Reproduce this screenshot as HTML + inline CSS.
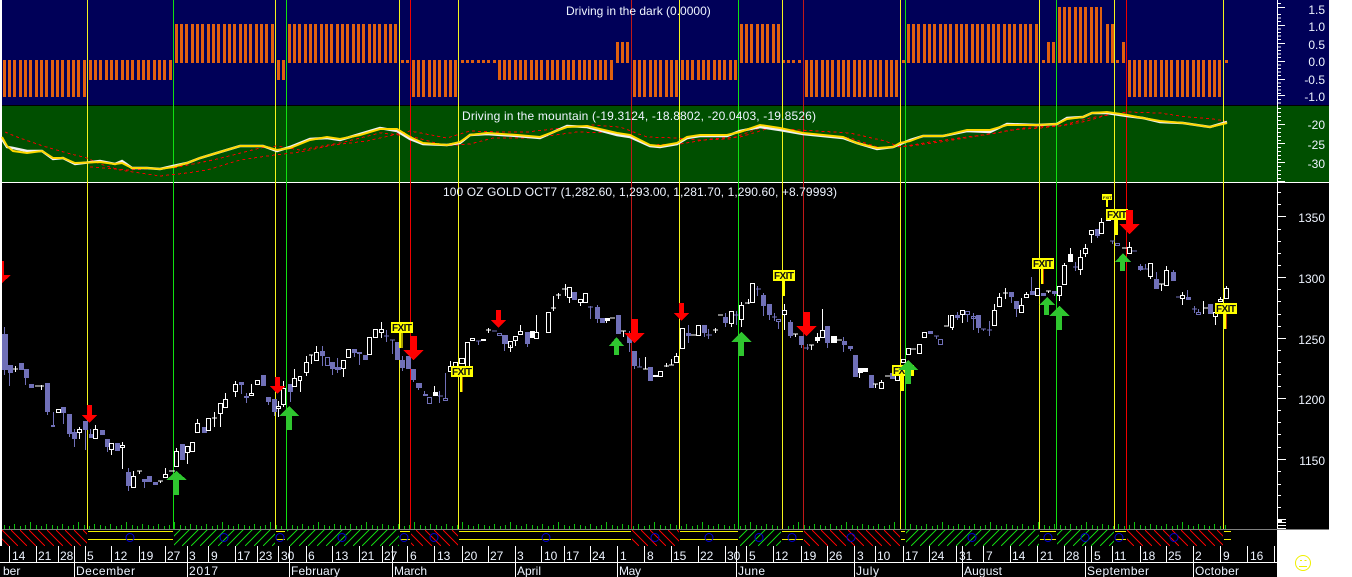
<!DOCTYPE html>
<html><head><meta charset="utf-8"><style>
html,body{margin:0;padding:0;background:#fff;width:1352px;height:577px;overflow:hidden}
svg{display:block}
text{font-family:"Liberation Sans",Arial,sans-serif;font-size:12px;fill:#eef4ff}
.c{shape-rendering:crispEdges}
.ax{fill:#e8f2ff}
.x{font-size:10px;font-weight:bold;fill:#111}
</style></head><body>
<svg width="1352" height="577" viewBox="0 0 1352 577" xmlns="http://www.w3.org/2000/svg">
<defs>
<pattern id="hr" patternUnits="userSpaceOnUse" x="2" y="530" width="9" height="16"><path class="c" d="M-18 0L-2 16M-9 0L7 16M0 0L16 16" stroke="#f00000" fill="none"/></pattern>
<pattern id="hg" patternUnits="userSpaceOnUse" x="2" y="530" width="9" height="16"><path class="c" d="M-2 0L-18 16M7 0L-9 16M16 0L0 16" stroke="#10d010" fill="none"/></pattern>
<pattern id="b" patternUnits="userSpaceOnUse" x="0" y="0" width="16" height="200"><path class="c" fill="#e0600f" d="M0 0H3V200H0zM5 0H8V200H5zM10 0H13V200H10z"/></pattern>
<pattern id="v" patternUnits="userSpaceOnUse" x="0" y="0" width="48" height="600"><path class="c" fill="#10c010" d="M0 525H1V529H0zM5 526H6V529H5zM10 524H11V529H10zM16 526H17V529H16zM21 525H22V529H21zM26 522H27V529H26zM32 525H33V529H32zM37 526H38V529H37zM42 524H43V529H42z"/></pattern>
</defs>
<g class="c">
<rect x="2" y="0" width="1327" height="105" fill="#000058"/>
<rect x="2" y="105" width="1327" height="1" fill="#000"/>
<rect x="2" y="106" width="1327" height="76" fill="#004f00"/>
<rect x="2" y="182" width="1327" height="1" fill="#fff"/>
<rect x="2" y="183" width="1327" height="346" fill="#000"/>
<rect x="2" y="529" width="1327" height="1" fill="#808080"/>
<rect x="2" y="530" width="1275" height="47" fill="#000"/>
<rect x="0" y="546" width="1277" height="31" fill="#000"/>

<!-- orange bars -->
<g fill="url(#b)">
<rect transform="translate(3)" y="60" width="84" height="37"/><rect transform="translate(412)" y="60" width="47" height="37"/><rect transform="translate(633)" y="60" width="45" height="37"/><rect transform="translate(805)" y="60" width="95" height="37"/><rect transform="translate(1128)" y="60" width="94" height="37"/>
<rect transform="translate(89)" y="60" width="84" height="20"/><rect transform="translate(277)" y="60" width="8" height="20"/><rect transform="translate(498)" y="60" width="116" height="20"/><rect transform="translate(681)" y="60" width="57" height="20"/>
<rect transform="translate(175)" y="24" width="100" height="39"/><rect transform="translate(288)" y="24" width="111" height="39"/><rect transform="translate(740)" y="24" width="40" height="39"/><rect transform="translate(907)" y="24" width="132" height="39"/><rect transform="translate(1106)" y="24" width="8" height="39"/>
<rect transform="translate(616)" y="42" width="15" height="21"/><rect transform="translate(1047)" y="42" width="9" height="21"/><rect transform="translate(1122)" y="42" width="3" height="21"/>
<rect transform="translate(1058)" y="7" width="44" height="56"/>
<rect transform="translate(401)" y="60" width="8" height="3"/><rect transform="translate(461)" y="60" width="35" height="3"/><rect transform="translate(782)" y="60" width="20" height="3"/><rect transform="translate(902)" y="60" width="3" height="3"/><rect transform="translate(1042)" y="60" width="3" height="3"/><rect transform="translate(1116)" y="60" width="3" height="3"/><rect transform="translate(1225)" y="60" width="3" height="3"/>
</g>

<!-- volume ticks -->
<rect transform="translate(4)" y="520" width="1223" height="9" fill="url(#v)"/>

<!-- hatch strip -->
<rect x="2" y="530" width="85" height="16" fill="url(#hr)"/>
<rect x="174" y="530" width="101" height="16" fill="url(#hg)"/>
<rect x="287" y="530" width="112" height="16" fill="url(#hg)"/>
<rect x="411" y="530" width="47" height="16" fill="url(#hr)"/>
<rect x="632" y="530" width="47" height="16" fill="url(#hr)"/>
<rect x="739" y="530" width="42" height="16" fill="url(#hg)"/>
<rect x="804" y="530" width="96" height="16" fill="url(#hr)"/>
<rect x="906" y="530" width="133" height="16" fill="url(#hg)"/>
<rect x="1057" y="530" width="57" height="16" fill="url(#hg)"/>
<rect x="1127" y="530" width="96" height="16" fill="url(#hr)"/>
<path fill="none" stroke="#f0f000" d="M88 531.5H173M88 539.5H173M276 531.5H285M276 539.5H285M400 531.5H410M400 539.5H410M459 531.5H631M459 539.5H631M680 531.5H738M680 539.5H738M782 531.5H803M782 539.5H803M901 531.5H905M901 539.5H905M1040 531.5H1056M1040 539.5H1056M1115 531.5H1126M1115 539.5H1126M1224 531.5H1231M1224 539.5H1231"/>
</g>
<g fill="none" stroke="#0000d0">
<circle cx="130" cy="537.5" r="4"/><circle cx="224" cy="537.5" r="4"/><circle cx="280" cy="537.5" r="4"/><circle cx="342" cy="537.5" r="4"/><circle cx="404" cy="537.5" r="4"/><circle cx="434" cy="537.5" r="4"/><circle cx="546" cy="537.5" r="4"/><circle cx="655" cy="537.5" r="4"/><circle cx="709" cy="537.5" r="4"/><circle cx="759" cy="537.5" r="4"/><circle cx="792" cy="537.5" r="4"/><circle cx="851" cy="537.5" r="4"/><circle cx="972" cy="537.5" r="4"/><circle cx="1048" cy="537.5" r="4"/><circle cx="1085" cy="537.5" r="4"/><circle cx="1119" cy="537.5" r="4"/><circle cx="1174" cy="537.5" r="4"/>
</g>

<g class="c" fill="none">
<!-- vertical lines -->
<path stroke="#f4f41c" d="M87.5 0V529M275.5 0V529M399.5 0V529M458.5 0V529M679.5 0V529M782.5 0V529M900.5 0V529M1039.5 0V529M1114.5 0V529M1223.5 0V529"/>
<path stroke="#10e010" d="M173.5 0V529M286.5 0V529M738.5 0V529M905.5 0V529M1056.5 0V529"/>
<path stroke="#f00000" d="M410.5 0V529M1126.5 0V529"/>
<path stroke="#c01818" d="M631.5 0V529M803.5 0V529"/>

<!-- blue candles -->
<path fill="#7070b8" d="M2 334H8V370H2zM8 365H13V373H8zM19 363H24V370H19zM24 369H29V378H24zM29 384H34V388H29zM45 383H50V412H45zM51 425H55V427H51zM61 407H66V413H61zM67 414H72V434H67zM72 432H77V439H72zM83 421H88V430H83zM89 434H93V438H89zM100 430H105V435H100zM105 439H110V447H105zM115 443H120V451H115zM126 472H131V486H126zM142 479H147V482H142zM147 476H152V482H147zM153 482H158V485H153zM180 444H185V460H180zM202 427H207V433H202zM239 382H244V385H239zM244 396H249V398H244zM261 375H266V386H261zM266 397H271V402H266zM272 399H277V412H272zM288 384H293V392H288zM320 351H325V356H320zM330 362H335V369H330zM335 367H341V370H335zM352 349H357V353H352zM357 352H362V354H357zM363 355H368V360H363zM395 342H400V360H395zM400 360H405V368H400zM406 356H411V369H406zM411 369H416V380H411zM416 383H422V388H416zM423 394H428V396H423zM502 335H508V344H502zM525 332H530V344H525zM572 292H577V300H572zM595 307H600V319H595zM600 318H605V323H600zM616 315H621V334H616zM627 335H632V343H627zM632 351H637V366H632zM648 367H653V381H648zM686 333H691V336H686zM702 325H707V333H702zM723 317H728V323H723zM761 295H766V306H761zM767 304H772V315H767zM788 322H793V336H788zM799 336H804V345H799zM825 326H830V343H825zM842 341H847V345H842zM848 346H853V349H848zM853 355H858V377H853zM869 375H874V388H869zM890 373H895V379H890zM928 331H933V334H928zM955 315H960V318H955zM976 315H981V328H976zM1009 292H1014V297H1009zM1014 301H1019V309H1014zM1030 291H1035V295H1030zM1041 293H1046V296H1041zM1052 291H1057V294H1052zM1095 229H1100V236H1095zM1138 266H1143V270H1138zM1154 279H1159V289H1154zM1171 272H1176V281H1171zM1186 297H1191V300H1186zM1208 304H1213V314H1208z"/>
<path stroke="#7070b8" d="M4.5 327V375M9.5 373V386M25.5 378V385M47.5 412V415M53.5 412V425M63.5 413V424M69.5 434V437M74.5 429V447M85.5 430V450M90.5 429V434M107.5 447V452M128.5 468V491M144.5 482V488M241.5 385V394M246.5 393V403M268.5 402V405M274.5 412V416M290.5 392V402M322.5 346V366M332.5 369V375M337.5 358V373M354.5 353V357M359.5 354V365M386.5 330V342M384 336H389M392.5 340V354M390 340H395M402.5 356V371M413.5 380V382M418.5 388V390M424.5 391V394M438 396H443M439.5 391V403M445.5 373V398M476 341H481M478.5 341V345M492 331H497M504.5 344V351M527.5 344V347M588 307H593M590.5 306V319M597.5 305V323M629.5 331V352M634.5 366V369M637 367H642M639.5 358V367M688.5 325V343M704.5 333V337M706 335H712M708.5 329V339M725.5 313V327M734 315H739M736.5 311V325M756 289H761M757.5 286V296M763.5 293V316M769.5 315V320M772 317H777M774.5 313V321M778.5 322V329M790.5 320V338M801.5 345V348M804 348H809M807.5 344V350M827.5 343V348M843.5 337V352M850.5 349V351M934 336H939M936.5 336V339M957.5 312V320M978.5 328V333M981 329H986M983.5 329V331M987 330H992M989.5 321V336M1011.5 297V303M1016.5 309V317M1031.5 277V291M1054.5 294V296M1073 267H1078M1075.5 262V271M1097.5 236V238M1110 241H1115M1112.5 241V244M1132 251H1137M1140.5 264V271M1143 269H1148M1145.5 264V269M1156.5 272V279M1173.5 270V272M1176 297H1181M1187.5 290V297M1192 309H1197M1194.5 306V313M1198.5 309V312"/>
<!-- blue hollow -->
<path stroke="#7070b8" d="M325.5 357.5H329.5V365.5H325.5zM427.5 397.5H431.5V403.5H427.5zM443.5 398.5H447.5V400.5H443.5zM497.5 333.5H501.5V335.5H497.5zM776.5 319.5H780.5V321.5H776.5zM938.5 339.5H942.5V344.5H938.5zM965.5 311.5H969.5V314.5H965.5zM971.5 316.5H975.5V318.5H971.5zM973.5 313V330M967.5 315V322M1115.5 243.5H1119.5V245.5H1115.5zM1196.5 312.5H1200.5V314.5H1196.5z"/>

<!-- white hollow -->
<path stroke="#fff" d="M56.5 409.5H60.5V412.5H56.5zM77.5 429.5H81.5V432.5H77.5zM93.5 429.5H97.5V438.5H93.5zM109.5 443.5H113.5V449.5H109.5zM120.5 445.5H124.5V447.5H120.5zM131.5 476.5H135.5V487.5H131.5zM163.5 474.5H167.5V477.5H163.5zM174.5 451.5H178.5V466.5H174.5zM185.5 446.5H189.5V452.5H185.5zM190.5 442.5H194.5V451.5H190.5zM195.5 423.5H199.5V432.5H195.5zM206.5 418.5H210.5V430.5H206.5zM218.5 403.5H222.5V413.5H218.5zM223.5 399.5H227.5V407.5H223.5zM233.5 384.5H237.5V391.5H233.5zM249.5 393.5H253.5V395.5H249.5zM255.5 380.5H259.5V384.5H255.5zM276.5 406.5H280.5V408.5H276.5zM281.5 388.5H285.5V404.5H281.5zM292.5 378.5H296.5V386.5H292.5zM298.5 376.5H301.5V380.5H298.5zM304.5 362.5H308.5V372.5H304.5zM314.5 352.5H318.5V360.5H314.5zM341.5 360.5H345.5V368.5H341.5zM346.5 349.5H350.5V357.5H346.5zM367.5 337.5H371.5V354.5H367.5zM373.5 329.5H377.5V337.5H373.5zM379.5 329.5H383.5V332.5H379.5zM448.5 366.5H451.5V371.5H448.5zM453.5 362.5H457.5V371.5H453.5zM459.5 358.5H464.5V363.5H459.5zM465.5 342.5H469.5V369.5H465.5zM470.5 338.5H474.5V340.5H470.5zM508.5 341.5H512.5V347.5H508.5zM513.5 336.5H517.5V340.5H513.5zM518.5 331.5H522.5V334.5H518.5zM534.5 332.5H538.5V338.5H534.5zM546.5 312.5H550.5V332.5H546.5zM567.5 287.5H571.5V297.5H567.5zM578.5 299.5H582.5V302.5H578.5zM583.5 293.5H587.5V302.5H583.5zM658.5 371.5H662.5V376.5H658.5zM674.5 356.5H678.5V362.5H674.5zM680.5 328.5H684.5V348.5H680.5zM696.5 325.5H700.5V335.5H696.5zM729.5 311.5H733.5V323.5H729.5zM739.5 305.5H743.5V319.5H739.5zM750.5 283.5H754.5V302.5H750.5zM782.5 310.5H786.5V314.5H782.5zM820.5 330.5H824.5V337.5H820.5zM879.5 382.5H883.5V388.5H879.5zM895.5 375.5H899.5V380.5H895.5zM901.5 359.5H905.5V362.5H901.5zM906.5 348.5H910.5V354.5H906.5zM917.5 344.5H921.5V353.5H917.5zM922.5 332.5H926.5V337.5H922.5zM950.5 315.5H953.5V327.5H950.5zM960.5 310.5H964.5V314.5H960.5zM992.5 310.5H996.5V325.5H992.5zM997.5 297.5H1001.5V306.5H997.5zM1019.5 305.5H1023.5V312.5H1019.5zM1024.5 294.5H1028.5V297.5H1024.5zM1035.5 288.5H1039.5V295.5H1035.5zM1057.5 286.5H1061.5V295.5H1057.5zM1062.5 265.5H1066.5V284.5H1062.5zM1078.5 257.5H1082.5V269.5H1078.5zM1083.5 248.5H1087.5V253.5H1083.5zM1089.5 230.5H1093.5V234.5H1089.5zM1099.5 222.5H1103.5V233.5H1099.5zM1127.5 247.5H1131.5V253.5H1127.5zM1148.5 263.5H1152.5V276.5H1148.5zM1164.5 270.5H1168.5V285.5H1164.5zM1180.5 295.5H1184.5V298.5H1180.5zM1213.5 312.5H1217.5V316.5H1213.5zM1218.5 299.5H1222.5V301.5H1218.5zM1224.5 288.5H1228.5V298.5H1224.5z"/>
<!-- white wicks and dashes -->
<path stroke="#fff" d="M13 369H18M15.5 366V372M35 386H44M41.5 385V390M79.5 427V429M79.5 433V439M95.5 425V429M111.5 450V455M122.5 442V445M122.5 448V469M133.5 471V476M137 471H142M139.5 471V474M158 481H163M160.5 481V483M165.5 468V474M169 471H175M176.5 448V451M187.5 453V464M197.5 419V423M212 418H217M214.5 412V427M220.5 414V427M225.5 393V399M235.5 381V384M235.5 392V397M251.5 384V393M278.5 401V406M278.5 409V417M283.5 381V388M283.5 405V407M294.5 369V378M300.5 381V392M306.5 356V362M306.5 373V376M309 355H313M311.5 355V364M316.5 346V352M343.5 369V377M375.5 337V338M381.5 322V329M381.5 333V338M434.5 386V392M450.5 361V366M486 330H491M488.5 328V333M481 340H486M510.5 345V352M515.5 341V346M520.5 325V331M536.5 315V332M551 308H556M553.5 296V311M556 295H561M558.5 293V299M562 289H567M565.5 284V296M569.5 298V303M580.5 303V306M605 320H610M606.5 320V323M610 318H615M621 331H626M623.5 331V337M643 369H648M645.5 357V369M653 376H658M664 366H669M666.5 363V367M669 365H674M671.5 359V365M676.5 353V356M691 335H696M713 330H718M715.5 328V333M718 315H723M731.5 324V327M741.5 302V305M741.5 320V327M745 303H750M748.5 299V304M784.5 304V310M784.5 315V330M793 334H798M795.5 334V337M809 345H814M811.5 345V350M817.5 333V337M817.5 341V343M822.5 309V330M837 340H842M858 370H863M859.5 368V378M873 384H878M875.5 384V388M881.5 380V382M885 376H890M911 349H916M944 326H949M948.5 315V326M952.5 328V330M962.5 315V323M994.5 304V310M999.5 293V297M1003 293H1008M1005.5 288V299M1021.5 298V305M1026.5 292V294M1046 291H1051M1048.5 291V293M1059.5 296V301M1064.5 263V265M1070.5 248V254M1080.5 250V257M1080.5 270V275M1085.5 244V248M1085.5 254V257M1091.5 235V243M1101.5 218V222M1122 248H1127M1129.5 242V247M1150.5 277V279M1159 284H1164M1161.5 284V291M1166.5 266V270M1182.5 292V295M1182.5 299V305M1203 308H1208M1203.5 301V314M1215.5 317V325M1220.5 297V299M1226.5 286V288"/>
<path fill="#fff" d="M433 392H438V396H433zM530 331H535V338H530zM815 337H820V341H815zM831 336H837V343H831zM858 368H863V373H858zM863 368H868V372H863zM1068 254H1073V262H1068zM1106 215H1111V221H1106zM481 339H486V341H481zM653 375H658V377H653zM605 318H610V321H605z"/>
</g>

<!-- polylines in green panel -->
<g fill="none">
<polyline class="c" stroke="#f00000" stroke-dasharray="3 3" points="5,132 17,137 43,146 67,153 87,158 100,164 120,170 160,176 187,173 207,170 240,160 267,156 300,152 333,145 367,141 393,135 410,131 447,138 470,131 500,132 527,132 570,127 593,125 620,127 647,137 677,138 700,140 730,139 760,128 800,130 850,133 885,141 900,147 930,142 967,137 997,133 1010,130 1040,128 1067,125 1087,121 1107,115 1127,112 1160,113 1187,117 1213,119 1225,121"/>
<polyline class="c" stroke="#f00000" stroke-dasharray="3 3" points="90,167 127,170 173,168 213,160 233,155 260,148 277,146 300,150 340,143 380,133 410,136 447,146 470,144 493,138 533,138 577,132 617,133 650,145 680,144 710,139 740,137 770,128 800,134 850,138 880,148 910,146 940,142 990,134 1030,127 1060,126 1090,118 1115,114"/>
<polyline stroke="#f0f0f0" stroke-width="2.5" points="2,139 7,147 13,148 27,151 42,151 53,159 63,158 75,164 100,161 115,164 122,161 132,168 147,168 160,169 173,166 187,163 200,158 220,152 240,146 263,146 277,151 290,147 310,139 327,138 340,140 360,134 380,128 397,131 410,139 423,144 447,145 460,143 470,135 487,134 517,136 540,138 567,126 587,127 617,135 630,137 650,146 660,147 677,144 687,138 700,136 727,136 740,131 760,127 780,130 803,134 843,138 857,143 877,149 893,147 910,140 923,136 943,136 967,131 990,132 1007,124 1037,125 1057,124 1067,118 1083,117 1092,113 1107,113 1127,116 1143,118 1160,122 1183,123 1210,127 1227,122"/>
<polyline stroke="#ffd800" stroke-width="2" points="2,137 7,146 13,151 27,153 42,151 53,158 63,158 75,163 100,162 115,164 122,163 132,168 147,168 160,169 173,167 187,163 200,158 220,152 240,146 263,146 277,150 290,148 310,140 327,137 340,139 360,135 380,129 397,129 410,137 423,143 447,145 460,142 470,135 487,133 517,135 540,137 567,127 587,126 617,133 630,135 650,145 660,146 677,143 687,137 700,135 727,135 740,132 760,125 780,128 803,133 843,137 857,143 877,148 893,147 900,143 910,141 923,136 943,136 967,130 990,130 1007,125 1037,125 1057,124 1067,119 1083,117 1092,113 1107,112 1127,115 1143,118 1160,121 1183,123 1210,127 1227,123"/>
</g>

<!-- EXIT labels -->
<g class="c">
<rect x="391" y="322" width="22" height="11" fill="#ffff00"/><path d="M399 333H401V348H399z" fill="#ffff00"/><path d="M401 333H403V348H401z" fill="#a8a000"/>
<rect x="451" y="366" width="22" height="11" fill="#ffff00"/><path d="M460 377H462V392H460z" fill="#ffff00"/><path d="M462 377H463V392H462z" fill="#a06000"/>
<rect x="773" y="270" width="22" height="11" fill="#ffff00"/><path d="M782 281H785V296H782z" fill="#ffff00"/>
<rect x="892" y="365" width="22" height="11" fill="#ffff00"/><path d="M900 376H904V391H900z" fill="#ffff00"/>
<rect x="1032" y="258" width="22" height="11" fill="#ffff00"/><path d="M1041 269H1043V284H1041z" fill="#ffff00"/><path d="M1043 269H1044V284H1043z" fill="#c04000"/>
<rect x="1106" y="209" width="22" height="11" fill="#ffff00"/><path d="M1115 220H1118V235H1115z" fill="#ffff00"/>
<rect x="1215" y="303" width="22" height="11" fill="#ffff00"/><path d="M1224 314H1226V329H1224z" fill="#ffff00"/><path d="M1226 314H1227V329H1226z" fill="#c04000"/>
<rect x="1102" y="194" width="10" height="6" fill="#ffff00"/><path d="M1106 200H1108V207H1106z" fill="#ffff00"/>
</g>
<text class="x" x="392" y="331" textLength="20">FXIT</text>
<text class="x" x="452" y="375" textLength="20">FXIT</text>
<text class="x" x="774" y="279" textLength="20">FXIT</text>
<text class="x" x="893" y="374" textLength="20">FXIT</text>
<text class="x" x="1033" y="267" textLength="20">FXIT</text>
<text class="x" x="1107" y="218" textLength="20">FXIT</text>
<text class="x" x="1216" y="312" textLength="20">FXIT</text>
<text x="1103" y="199" style="font-size:4px;font-weight:bold;fill:#222">FXIT</text>

<!-- arrows -->
<g class="c" fill="#ff0000">
<path d="M2 261H4V275H11L2 283z"/>
<path d="M87 405H92V415H97L89.5 423L82 415H87z"/>
<path d="M275 377H280V386H285L277.5 394L270 386H275z"/>
<path d="M410 336H417V350H424L413.5 360L403 350H410z"/>
<path d="M496 310H501V320H506L498.5 328L491 320H496z"/>
<path d="M631 319H638V333H645L634.5 343L624 333H631z"/>
<path d="M679 303H684V313H689L681.5 321L674 313H679z"/>
<path d="M803 312H810V326H817L806.5 336L796 326H803z"/>
<path d="M1126 210H1133V224H1140L1129.5 234L1119 224H1126z"/>
</g>
<g class="c" fill="#2fc62f">
<path d="M173 495V480H166L176.5 471L187 480H179V495z"/>
<path d="M286 430V416H279L289 406L299 416H292V430z"/>
<path d="M614 355V346H609L616.5 337L624 346H619V355z"/>
<path d="M738 356V342H731L741.5 332L752 342H744V356z"/>
<path d="M905 384V370H898L908 360L918 370H911V384z"/>
<path d="M1044 315V305H1039L1047 297L1055 305H1049V315z"/>
<path d="M1056 330V316H1049L1059.5 306L1070 316H1062V330z"/>
<path d="M1120 271V262H1115L1123 253L1131 262H1125V271z"/>
</g>

<!-- axis -->
<g class="c" fill="none" stroke="#fff">
<path d="M1277.5 0V529"/>
<path d="M1278 3.5H1281M1278 14.5H1281M1278 18H1281M1278 21.5H1281M1278 29H1281M1278 32.5H1281M1278 36H1281M1278 39.500H1281M1278 47H1281M1278 50.500H1281M1278 54H1281M1278 57.500H1281M1278 65H1281M1278 68.500H1281M1278 72H1281M1278 75.500H1281M1278 83H1281M1278 86.500H1281M1278 90H1281M1278 93.500H1281M1278 99.500H1281M1278 103H1281"/>
<path d="M1278 7.500H1285M1278 25.500H1285M1278 43.500H1285M1278 61.500H1285M1278 79.500H1285M1278 95.500H1285"/>
<path d="M1278 108.500H1281M1278 112.500H1281M1278 116.500H1281M1278 120.500H1281M1278 128.500H1281M1278 132.500H1281M1278 136.500H1281M1278 140.500H1281M1278 147.500H1281M1278 151.500H1281M1278 155.500H1281M1278 159.500H1281M1278 166.500H1281M1278 170.500H1281M1278 174.500H1281M1278 178.500H1281"/>
<path d="M1278 124.500H1285M1278 143.500H1285M1278 162.500H1285M1278 181.500H1285"/>
<path d="M1278 192.500H1281M1278 204.500H1281M1278 229.500H1281M1278 241.500H1281M1278 253.500H1281M1278 265.500H1281M1278 289.500H1281M1278 301.500H1281M1278 314.500H1281M1278 326.500H1281M1278 350.500H1281M1278 362.500H1281M1278 374.500H1281M1278 386.500H1281M1278 410.500H1281M1278 422.500H1281M1278 434.500H1281M1278 447.500H1281M1278 471.500H1281M1278 484.500H1281M1278 495.500H1281M1278 507.500H1281"/>
<path d="M1278 216.500H1286M1278 277.500H1286M1278 338.500H1286M1278 398.500H1286M1278 459.500H1286M1278 519.500H1286M1278 522.500H1286M1278 525.500H1286M1278 528.500H1286"/>
<path d="M1278 521H1282" stroke-width="4"/>
</g>
<g class="ax" text-anchor="end">
<text x="1325" y="14">1.5</text><text x="1325" y="31">1.0</text><text x="1325" y="49">0.5</text><text x="1325" y="66">0.0</text><text x="1325" y="84">-0.5</text><text x="1325" y="101">-1.0</text>
<text x="1325" y="129">-20</text><text x="1325" y="149">-25</text><text x="1325" y="168">-30</text>
<text x="1325" y="222">1350</text><text x="1325" y="283">1300</text><text x="1325" y="344">1250</text><text x="1325" y="404">1200</text><text x="1325" y="465">1150</text>
</g>

<!-- titles -->
<text x="566" y="15">Driving in the dark (0.0000)</text>
<text x="462" y="120" textLength="354">Driving in the mountain (-19.3124, -18.8802, -20.0403, -19.8526)</text>
<text x="443" y="196" textLength="394">100 OZ GOLD OCT7 (1,282.60, 1,293.00, 1,281.70, 1,290.60, +8.79993)</text>

<!-- date axis -->
<g class="c" fill="none" stroke="#fff">
<path d="M0 562.500H1277"/>
<path d="M9.500 546V562M36.500 546V562M58.500 546V562M85.500 546V562M111.500 546V562M139.500 546V562M165.500 546V562M187.500 546V562M208.500 546V562M235.500 546V562M257.500 546V562M278.500 546V562M306.500 546V562M332.500 546V562M359.500 546V562M382.500 546V562M407.500 546V562M434.500 546V562M462.500 546V562M488.500 546V562M541.500 546V562M564.500 546V562M590.500 546V562M644.500 546V562M671.500 546V562M698.500 546V562M725.500 546V562M746.500 546V562M773.500 546V562M801.500 546V562M827.500 546V562M875.500 546V562M903.500 546V562M929.500 546V562M956.500 546V562M983.500 546V562M1010.500 546V562M1037.500 546V562M1064.500 546V562M1091.500 546V562M1112.500 546V562M1140.500 546V562M1166.500 546V562M1220.500 546V562M1247.500 546V562M1274.500 546V562"/>
<path d="M74.500 546V577M187.500 546V577M289.500 546V577M392.500 546V577M515.500 546V577M617.500 546V577M736.500 546V577M854.500 546V577M962.500 546V577M1085.500 546V577M1193.500 546V577"/>
</g>
<g>
<text x="12" y="560">14</text><text x="38" y="560">21</text><text x="60" y="560">28</text><text x="87" y="560">5</text><text x="114" y="560">12</text><text x="140" y="560">19</text><text x="167" y="560">27</text><text x="189" y="560">3</text><text x="211" y="560">9</text><text x="237" y="560">17</text><text x="259" y="560">23</text><text x="281" y="560">30</text><text x="308" y="560">6</text><text x="335" y="560">13</text><text x="361" y="560">21</text><text x="384" y="560">27</text><text x="410" y="560">6</text><text x="437" y="560">13</text>
<text x="464" y="560">20</text><text x="490" y="560">27</text><text x="517" y="560">3</text><text x="544" y="560">10</text><text x="566" y="560">17</text><text x="592" y="560">24</text><text x="620" y="560">1</text><text x="647" y="560">8</text><text x="673" y="560">15</text><text x="700" y="560">22</text><text x="727" y="560">30</text><text x="749" y="560">5</text><text x="775" y="560">12</text><text x="803" y="560">19</text><text x="829" y="560">26</text><text x="857" y="560">3</text><text x="877" y="560">10</text>
<text x="905" y="560">17</text><text x="931" y="560">24</text><text x="959" y="560">31</text><text x="986" y="560">7</text><text x="1012" y="560">14</text><text x="1040" y="560">21</text><text x="1066" y="560">28</text><text x="1094" y="560">5</text><text x="1114" y="560">11</text><text x="1142" y="560">18</text><text x="1168" y="560">25</text><text x="1195" y="560">2</text><text x="1223" y="560">9</text><text x="1250" y="560">16</text>
</g>
<g>
<text x="3" y="575">ber</text><text x="76" y="575" textLength="59">December</text><text x="189" y="575" textLength="29">2017</text><text x="291" y="575" textLength="49">February</text><text x="394" y="575" textLength="33">March</text><text x="517" y="575" textLength="24">April</text><text x="619" y="575" textLength="22">May</text><text x="738" y="575" textLength="27">June</text><text x="856" y="575" textLength="23">July</text><text x="964" y="575" textLength="38">August</text><text x="1087" y="575" textLength="62">September</text><text x="1195" y="575" textLength="44">October</text>
</g>

<!-- smiley -->
<g fill="none" stroke="#f0f000" stroke-width="1">
<circle cx="1303" cy="563" r="7.500"/>
<path class="c" d="M1299 566.500H1307M1300 560.500H1302M1304.500 560.500H1306.500"/>
</g>
</svg>
</body></html>
